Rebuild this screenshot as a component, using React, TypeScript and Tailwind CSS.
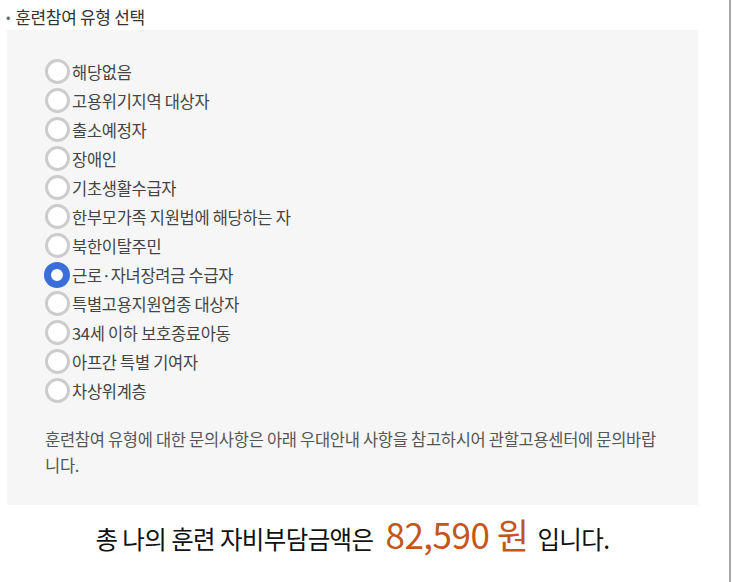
const options = [
  "해당없음",
  "고용위기지역 대상자",
  "출소예정자",
  "장애인",
  "기초생활수급자",
  "한부모가족 지원법에 해당하는 자",
  "북한이탈주민",
  "근로·자녀장려금 수급자",
  "특별고용지원업종 대상자",
  "34세 이하 보호종료아동",
  "아프간 특별 기여자",
  "차상위계층",
];

const selected = 7;

export default function App() {
  return (
    <div
      className="w-[733px] h-[582px] bg-white overflow-hidden"
      style={{ fontFamily: '"Noto Sans CJK KR", "Noto Sans", sans-serif' }}
    >
      <div className="w-[731px] h-full border-r-2 border-[#a8a8a8]">
        <div className="h-[30px] pl-[6px] pt-[4px] flex items-center gap-[5px] text-[17px] text-[#333] leading-[20px] tracking-[-0.3px]">
          <span className="text-[13px] text-[#666]">•</span>
          <span>훈련참여 유형 선택</span>
        </div>
        <div className="ml-[7px] w-[691px] h-[475px] bg-[#f6f6f6] pl-[38px] pr-[34px] pt-[27px]">
          <div className="flex flex-col">
            {options.map((label, i) => (
              <label key={label} className="flex items-center h-[29px] cursor-pointer">
                {i === selected ? (
                  <span className="w-[26px] h-[26px] -ml-[1px] rounded-full border-[7px] border-[#3a6fdb] bg-white shrink-0" />
                ) : (
                  <span className="w-[25px] h-[25px] rounded-full border-[3px] border-[#cccccc] bg-white shrink-0" />
                )}
                <span className="ml-[2px] text-[16.5px] text-[#444] leading-[20px] tracking-[-0.3px]">{label}</span>
              </label>
            ))}
          </div>
          <p className="mt-[21px] text-[16.5px] text-[#555] leading-[26px] tracking-[-0.3px]">
            훈련참여 유형에 대한 문의사항은 아래 우대안내 사항을 참고하시어 관할고용센터에 문의바랍니다.
          </p>
        </div>
        <div className="ml-[7px] w-[691px] flex items-baseline justify-center pt-[3px] text-[24.5px] text-[#111] tracking-[-0.6px]">
          <span>총 나의 훈련 자비부담금액은</span>
          <span className="ml-[12px] mr-[9px] text-[35px] text-[#c4561c] tracking-[-0.5px]">82,590 원</span>
          <span>입니다.</span>
        </div>
      </div>
    </div>
  );
}
